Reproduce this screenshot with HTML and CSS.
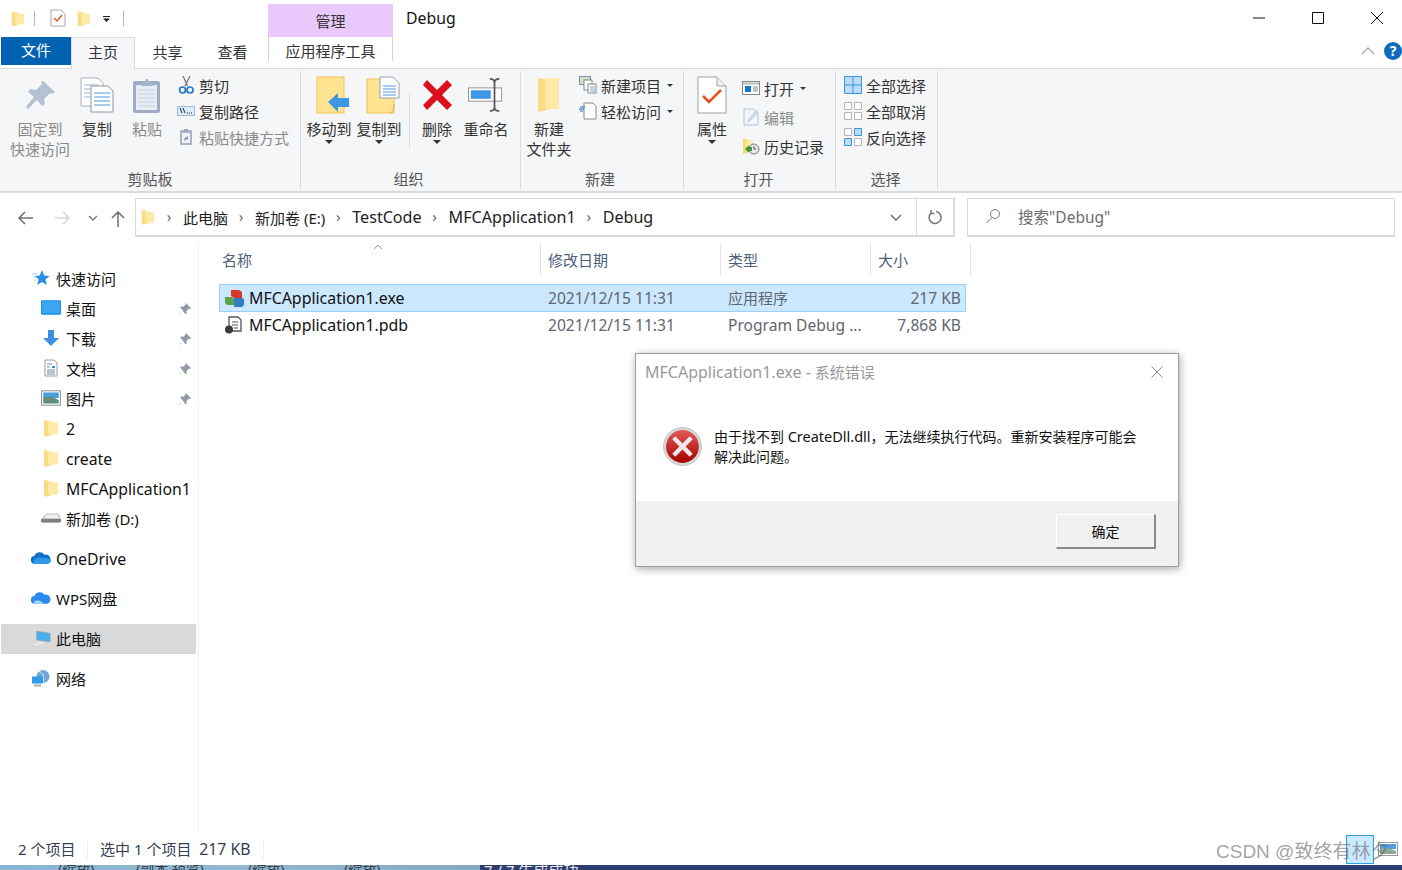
FILE: index.html
```html
<!DOCTYPE html>
<html lang="zh-CN">
<head>
    <meta charset="UTF-8">
    <title>Debug</title>
    <link rel="stylesheet" href="styles.css">
</head>
<body>
    <svg class="sprites" width="0" height="0">
        <symbol id="folder" viewBox="0 0 16 18">
            <path d="M1 1l7 1.500V16.500L1 17.500z" fill="#f8d775"/>
            <path d="M4 2h5v1.500h6v12H4z" fill="#ffe9a6"/>
            <path d="M1 1l4 1.500v15l-4-.5z" fill="#fbdc86"/>
        </symbol>
        <symbol id="pin" viewBox="0 0 16 16">
            <path d="M9 1l6 6-1.500 1-1-.5-3 3 .5 2.500-1.500 1L5.500 10 2 14.500 1.500 14 6 10 2.500 6.500l1-1.500 2.500.5 3-3L8.500 2z" fill="#8f9aa6"/>
        </symbol>
        <symbol id="doc" viewBox="0 0 30 38">
            <path d="M1 1h19l9 9v27H1z" fill="#fff" stroke="#a2a2a2"/>
            <path d="M20 1v9h9" fill="#eee" stroke="#a2a2a2"/>
        </symbol>
    </svg>

    <div class="window">
        <!-- title bar -->
        <div class="titlebar">
            <div class="qat">
                <svg class="ico-16"><use href="#folder"/></svg>
                <span class="qat-sep"></span>
                <svg class="qat-check" viewBox="0 0 16 18">
                    <path d="M1 1h10l4 4v12H1z" fill="#fff" stroke="#a8a8a8"/>
                    <path d="M4 9l3 3 5-6" fill="none" stroke="#e0562a" stroke-width="1.500"/>
                </svg>
                <svg class="ico-16"><use href="#folder"/></svg>
                <svg class="qat-drop" viewBox="0 0 7 6"><path d="M0 .5h7" stroke="#222"/><path d="M0 2.500h7L3.500 6z" fill="#222"/></svg>
                <span class="qat-sep"></span>
            </div>
            <div class="ctx-head">管理</div>
            <div class="win-title">Debug</div>
            <div class="win-buttons">
                <svg class="win-btn" viewBox="0 0 14 14"><path d="M1 7h12" stroke="#111" fill="none"/></svg>
                <svg class="win-btn" viewBox="0 0 14 14"><path d="M1.500 1.500h11v11h-11z" stroke="#111" fill="none"/></svg>
                <svg class="win-btn" viewBox="0 0 14 14"><path d="M1 1l12 12M13 1L1 13" stroke="#111" fill="none"/></svg>
            </div>
        </div>

        <!-- tabs -->
        <div class="tabs">
            <div class="tab tab-file">文件</div>
            <div class="tab tab-home">主页</div>
            <div class="tab tab-share">共享</div>
            <div class="tab tab-view">查看</div>
            <div class="tab tab-tools">应用程序工具</div>
            <div class="tabs-right">
                <svg class="collapse" viewBox="0 0 14 8"><path d="M1 7l6-6 6 6" fill="none" stroke="#a9a9a9" stroke-width="1.300"/></svg>
                <div class="help">?</div>
            </div>
        </div>

        <!-- ribbon -->
        <div class="ribbon">
            <div class="group g-clip">
                <div class="group-body">
                    <div class="large w-pin disabled">
                        <svg class="large-ico" viewBox="0 0 36 36"><path d="M21 4l12 11-3 2-2-1-6 6 1 5-3 2-5-6-9 9-2-2 8-10-6-5 2-3 6 1 6-6-1-2z" fill="#b4c1d2"/></svg>
                        <span>固定到<br>快速访问</span>
                    </div>
                    <div class="large w-copy">
                        <svg class="large-ico" viewBox="0 0 36 36">
                            <path d="M2 1h17l5 5v23H2z" fill="#fff" stroke="#aab0b8"/>
                            <path d="M5 8h15M5 12h15M5 16h15M5 20h15" stroke="#8cb6e6"/>
                            <path d="M12 9h17l5 5v21H12z" fill="#fff" stroke="#8f959c"/>
                            <path d="M15 16h16M15 20h16M15 24h16M15 28h16" stroke="#4f97e8"/>
                        </svg>
                        <span>复制</span>
                    </div>
                    <div class="large w-paste disabled">
                        <svg class="large-ico" viewBox="0 0 36 36">
                            <rect x="4" y="4" width="27" height="32" rx="2" fill="#9fadc4"/>
                            <rect x="7" y="8" width="21" height="25" fill="#e8edf5"/>
                            <path d="M9 13h17M9 17h17M9 21h17M9 25h17M9 29h17" stroke="#c4d0e0"/>
                            <path d="M12 7l4-2 1-3h2l1 3 4 2v2H12z" fill="#a8b5c9"/>
                        </svg>
                        <span>粘贴</span>
                    </div>
                    <div class="small-stack stack-clip">
                        <div class="small">
                            <svg class="small-ico" viewBox="0 0 16 18"><path d="M5 0l4.500 10M12 0L7 10" stroke="#777" stroke-width="1.300" fill="none"/><circle cx="4.500" cy="14" r="3" fill="none" stroke="#1f78c8" stroke-width="1.700"/><circle cx="12" cy="14" r="3" fill="none" stroke="#1f78c8" stroke-width="1.700"/></svg>
                            <span>剪切</span>
                        </div>
                        <div class="small">
                            <svg class="small-ico" viewBox="0 0 18 12"><rect x=".5" y="1.500" width="17" height="9" fill="#dcebfb" stroke="#9fb8d3"/><path d="M3 3l2 5M6 3l2 5" stroke="#223" fill="none"/><path d="M10 8h1M12 8h1M14 8h1" stroke="#223"/></svg>
                            <span>复制路径</span>
                        </div>
                        <div class="small disabled">
                            <svg class="small-ico" viewBox="0 0 16 18"><rect x="2" y="2" width="12" height="15" rx="1" fill="#a9b5c7"/><rect x="4" y="5" width="8" height="10" fill="#eef2f7"/><path d="M6 13l1-4 1 1 2-2v4l-1-1z" fill="#7e8da3"/><rect x="6" y="1" width="4" height="3" fill="#9aa8bc"/></svg>
                            <span>粘贴快捷方式</span>
                        </div>
                    </div>
                </div>
                <div class="group-label">剪贴板</div>
            </div>

            <div class="group g-org">
                <div class="group-body">
                    <div class="large w-org">
                        <svg class="large-ico" viewBox="-5 0 36 38">
                            <rect x="1" y="1" width="27" height="36" fill="#ffe390" stroke="#eec35a"/>
                            <path d="M12 26l10-9v5h11v9H22v5z" fill="#3d97e4"/>
                        </svg>
                        <span>移动到</span>
                        <i class="caret"></i>
                    </div>
                    <div class="large w-org">
                        <svg class="large-ico" viewBox="-5 0 36 38">
                            <rect x="1" y="3" width="27" height="34" fill="#ffe390" stroke="#eec35a"/>
                            <path d="M14 1h13l6 6v15H14z" fill="#fff" stroke="#9aa0a8"/>
                            <path d="M17 10h13M17 13h13M17 16h13M17 19h13" stroke="#4f97e8"/>
                            <path d="M24 37c3-1 4-4 4-9" stroke="#e0b040" fill="none"/>
                        </svg>
                        <span>复制到</span>
                        <i class="caret"></i>
                    </div>
                    <span class="thin-sep"></span>
                    <div class="large w-del">
                        <svg class="large-ico" viewBox="0 0 34 34"><path d="M3 7l4-5 10 10L27 2l5 5-10 10 10 10-5 5-10-10L7 32l-4-5 10-10z" fill="#dc0f1c"/></svg>
                        <span>删除</span>
                        <i class="caret"></i>
                    </div>
                    <div class="large w-org w-ren">
                        <svg class="large-ico" viewBox="0 0 38 36">
                            <rect x=".5" y="10.500" width="35" height="14" fill="#fff" stroke="#8f8f8f"/>
                            <rect x="3" y="13" width="21" height="9" fill="#3d97e4"/>
                            <path d="M23 1c4 0 5 2 5 4v26c0 2-1 4-5 4M33 1c-4 0-5 2-5 4v26c0 2 1 4 5 4" fill="none" stroke="#555" stroke-width="1.800"/>
                        </svg>
                        <span>重命名</span>
                    </div>
                </div>
                <div class="group-label">组织</div>
            </div>

            <div class="group g-new">
                <div class="group-body">
                    <div class="large w-newf">
                        <svg class="large-ico" viewBox="0 0 24 36"><path d="M1 1l12 3v28l-12 3z" fill="#f8d775"/><path d="M7 1h15v28l2 3H7z" fill="#ffe9a6"/><path d="M1 1l7 2v30l-7 2z" fill="#fbdc86"/></svg>
                        <span>新建<br>文件夹</span>
                    </div>
                    <div class="small-stack stack-new">
                        <div class="small">
                            <svg class="small-ico" viewBox="0 0 18 18"><rect x=".5" y=".5" width="11" height="8" fill="#cfe0c8" stroke="#7d93a8"/><rect x="5" y="4" width="8" height="10" fill="#fff" stroke="#888"/><rect x="9" y="8" width="8" height="9" fill="#fff" stroke="#888"/><path d="M11 11h5M11 13h5M11 15h5" stroke="#7fa8d8"/></svg>
                            <span>新建项目</span><i class="caret-inline"></i>
                        </div>
                        <div class="small">
                            <svg class="small-ico" viewBox="0 0 18 18"><path d="M5 1h9l3 3v13H5z" fill="#fff" stroke="#888"/><path d="M1 5h5M0 7h5M1 9h3" stroke="#1b6fc0"/></svg>
                            <span>轻松访问</span><i class="caret-inline"></i>
                        </div>
                    </div>
                </div>
                <div class="group-label">新建</div>
            </div>

            <div class="group g-open">
                <div class="group-body">
                    <div class="large w-prop">
                        <svg class="large-ico" viewBox="0 0 30 38">
                            <use href="#doc"/>
                            <path d="M6 20l6 6 12-12" fill="none" stroke="#e5521f" stroke-width="2.600"/>
                        </svg>
                        <span>属性</span>
                        <i class="caret"></i>
                    </div>
                    <div class="small-stack stack-open">
                        <div class="small">
                            <svg class="small-ico" viewBox="0 0 18 14"><rect x=".5" y=".5" width="17" height="13" fill="#fff" stroke="#888"/><path d="M1 2.500h16" stroke="#bbb" stroke-width="2"/><rect x="3" y="5" width="6" height="6" fill="#0f78d4"/><path d="M11 6h5M11 8h5M11 10h5" stroke="#888"/></svg>
                            <span>打开</span><i class="caret-inline"></i>
                        </div>
                        <div class="small disabled">
                            <svg class="small-ico" viewBox="0 0 16 18"><path d="M1 1h10l4 4v12H1z" fill="#f2f5fa" stroke="#b5c3d8"/><path d="M5 14l1-3 7-8 2 1-7 8z" fill="#d4deeb" stroke="#a9b8cc" stroke-width=".6"/></svg>
                            <span>编辑</span>
                        </div>
                        <div class="small">
                            <svg class="small-ico" viewBox="0 0 18 18"><path d="M1 1l6 2v12l-6 2z" fill="#f8d775"/><path d="M4 3h7v11H4z" fill="#ffe9a6"/><circle cx="12" cy="12" r="5" fill="#e8e8e8" stroke="#777"/><path d="M12 9v3h2" stroke="#555" fill="none"/><path d="M3 12l4-4v2h3v4H7v2z" fill="#3a9a3a"/></svg>
                            <span>历史记录</span>
                        </div>
                    </div>
                </div>
                <div class="group-label">打开</div>
            </div>

            <div class="group g-sel">
                <div class="group-body">
                    <div class="small-stack stack-sel">
                        <div class="small">
                            <svg class="small-ico" viewBox="0 0 18 18"><path d="M.5.5h17v17H.5zM9 .5v17M.5 9h17" stroke="#3a96dd" fill="#bcdcf7"/></svg>
                            <span>全部选择</span>
                        </div>
                        <div class="small">
                            <svg class="small-ico" viewBox="0 0 18 18"><path d="M.5.5h7v7h-7zM10.500.5h7v7h-7zM.5 10.500h7v7h-7zM10.500 10.500h7v7h-7z" stroke="#b5b5b5" fill="#fff"/></svg>
                            <span>全部取消</span>
                        </div>
                        <div class="small">
                            <svg class="small-ico" viewBox="0 0 18 18"><path d="M.5.5h7v7h-7zM10.500 10.500h7v7h-7z" stroke="#b5b5b5" fill="#fff"/><path d="M10.500.5h7v7h-7zM.5 10.500h7v7h-7z" stroke="#3a96dd" fill="#bcdcf7"/></svg>
                            <span>反向选择</span>
                        </div>
                    </div>
                </div>
                <div class="group-label">选择</div>
            </div>
        </div>

        <!-- address row -->
        <div class="addr-row">
            <div class="nav-btns">
                <svg class="nav-back" viewBox="0 0 16 14"><path d="M8 1L2 7l6 6M2 7h14" fill="none" stroke="#6d6d6d" stroke-width="1.500"/></svg>
                <svg class="nav-fwd" viewBox="0 0 16 14"><path d="M8 1l6 6-6 6M14 7H0" fill="none" stroke="#d6d6d6" stroke-width="1.500"/></svg>
                <svg class="nav-down" viewBox="0 0 10 6"><path d="M1 1l4 4 4-4" fill="none" stroke="#7a7a7a" stroke-width="1.400"/></svg>
                <svg class="nav-up" viewBox="0 0 14 16"><path d="M1 7l6-6 6 6M7 1v15" fill="none" stroke="#6d6d6d" stroke-width="1.500"/></svg>
            </div>
            <div class="addr-box">
                <svg class="addr-folder"><use href="#folder"/></svg>
                <span class="crumb-sep">›</span><span class="crumb">此电脑</span>
                <span class="crumb-sep">›</span><span class="crumb">新加卷 (E:)</span>
                <span class="crumb-sep">›</span><span class="crumb crumb-lat">TestCode</span>
                <span class="crumb-sep">›</span><span class="crumb crumb-lat">MFCApplication1</span>
                <span class="crumb-sep">›</span><span class="crumb crumb-lat">Debug</span>
                <div class="addr-tools">
                    <svg class="addr-down" viewBox="0 0 12 7"><path d="M1 1l5 5 5-5" fill="none" stroke="#666" stroke-width="1.400"/></svg>
                    <div class="addr-refresh">
                        <svg viewBox="0 0 16 16" width="16" height="16"><path d="M9 2.500a6 6 0 1 1-5 1.500M4 1v3.500h3.500" fill="none" stroke="#777" stroke-width="1.500"/></svg>
                    </div>
                </div>
            </div>
            <div class="search-box">
                <svg class="search-ico" viewBox="0 0 16 16"><circle cx="10" cy="6" r="4.500" fill="none" stroke="#777"/><path d="M7 9.500L1.500 15" stroke="#777"/></svg>
                <span>搜索"Debug"</span>
            </div>
        </div>

        <!-- main -->
        <div class="main">
            <div class="navpane">
                <div class="nav-item top">
                    <svg class="nav-ico" viewBox="0 0 18 18"><path d="M10 1l2.200 5.500 5.300.4-4.100 3.500 1.400 5.600L10 13l-4.800 3 1.400-5.600L3 7l4.700-.5z" fill="#2d8de0"/><path d="M0 5h5M1 8h3M2 11h2" stroke="#9cc8ee"/></svg>
                    <span>快速访问</span>
                </div>
                <div class="nav-item child">
                    <svg class="nav-ico" viewBox="0 0 18 14"><rect width="18" height="13" rx="1" fill="#1e8fe6"/><rect x="1" y="1" width="16" height="10.500" fill="#3aa6f2"/></svg>
                    <span>桌面</span><svg class="pin"><use href="#pin"/></svg>
                </div>
                <div class="nav-item child">
                    <svg class="nav-ico" viewBox="0 0 18 18"><path d="M6 1h6v8h5l-8 8-8-8h5z" fill="#3d8fe0"/></svg>
                    <span>下载</span><svg class="pin"><use href="#pin"/></svg>
                </div>
                <div class="nav-item child">
                    <svg class="nav-ico" viewBox="0 0 16 18"><path d="M2 1h9l3 3v13H2z" fill="#fff" stroke="#9a9a9a"/><path d="M4 5h5M4 8h3M4 11h8M4 13h8M4 15h8" stroke="#7b8a99"/><path d="M9 7h3v2H9z" fill="#3d8fe0"/></svg>
                    <span>文档</span><svg class="pin"><use href="#pin"/></svg>
                </div>
                <div class="nav-item child">
                    <svg class="nav-ico" viewBox="0 0 18 14"><rect x=".5" y=".5" width="17" height="13" fill="#fff" stroke="#9a9a9a"/><rect x="2" y="2" width="14" height="5" fill="#4d9de0"/><path d="M2 7c3-2 7-2 14 2v3H2z" fill="#5e8f7d"/></svg>
                    <span>图片</span><svg class="pin"><use href="#pin"/></svg>
                </div>
                <div class="nav-item child"><svg class="nav-ico"><use href="#folder"/></svg><span class="lat">2</span></div>
                <div class="nav-item child"><svg class="nav-ico"><use href="#folder"/></svg><span class="lat">create</span></div>
                <div class="nav-item child"><svg class="nav-ico"><use href="#folder"/></svg><span class="lat">MFCApplication1</span></div>
                <div class="nav-item child">
                    <svg class="nav-ico" viewBox="0 0 18 10"><path d="M0 6l5-5h11l2 5v2l-1 1H1L0 8z" fill="#c8c8c8"/><path d="M0 6h18v2l-1 1H1L0 8z" fill="#7f7f7f"/><path d="M5 2h10l1 3H3z" fill="#efefef"/></svg>
                    <span>新加卷 (D:)</span>
                </div>
                <div class="nav-item top gap">
                    <svg class="nav-ico" viewBox="0 0 21 14"><path d="M4 13a4 4 0 0 1-.500-8A6 6 0 0 1 14 3.500 4.500 4.500 0 0 1 17 13z" fill="#0f6fc6"/><path d="M4 13a4 4 0 0 1 0-5c4-2 12-2 17 1 0 3-2 4-4 4z" fill="#2a9bea"/></svg>
                    <span class="lat">OneDrive</span>
                </div>
                <div class="nav-item top gap">
                    <svg class="nav-ico" viewBox="0 0 21 14"><path d="M4 13a4 4 0 0 1-.500-8A6 6 0 0 1 14 3.500 4.500 4.500 0 0 1 17 13z" fill="#2a8bf0"/><path d="M3 11c4-3 8-1 10 2H4z" fill="#a6d4fb"/></svg>
                    <span>WPS网盘</span>
                </div>
                <div class="nav-item top gap selected">
                    <svg class="nav-ico" viewBox="0 0 21 16"><path d="M6 1l14 2v9L6 10z" fill="#48b0ee" stroke="#7f9fb5" stroke-width=".7"/><path d="M1 15l8-3 6 1-7 3z" fill="#e8e8e8"/></svg>
                    <span>此电脑</span>
                </div>
                <div class="nav-item top gap">
                    <svg class="nav-ico" viewBox="0 0 20 17"><circle cx="12" cy="7" r="6.500" fill="#6fa8d8"/><path d="M8 2c4 1 6 5 4 11" stroke="#d8e8f5" fill="none"/><rect x="1" y="7" width="11" height="7" fill="#2f9ae8"/><path d="M3 16h7" stroke="#aaa" stroke-width="2"/></svg>
                    <span>网络</span>
                </div>
            </div>

            <div class="files">
                <svg class="sort-up" viewBox="0 0 10 6"><path d="M1 5l4-4 4 4" fill="none" stroke="#999"/></svg>
                <div class="file-head">
                    <div class="col c-name">名称</div>
                    <div class="col c-date">修改日期</div>
                    <div class="col c-type">类型</div>
                    <div class="col c-size">大小</div>
                </div>
                <div class="file-row sel">
                    <div class="c-name cell-name">
                        <svg class="file-ico" viewBox="0 0 20 18">
                            <path d="M7 1h8l3 2v6h-8l-3-2z" fill="#d8382c"/>
                            <path d="M1 8h7l2 2v6H3l-2-2z" fill="#5aa34a"/>
                            <path d="M10 9h8l2 1v6l-2 2h-8z" fill="#2f7fc1"/>
                        </svg>
                        <span>MFCApplication1.exe</span>
                    </div>
                    <div class="cell c-date">2021/12/15 11:31</div>
                    <div class="cell c-type cjk">应用程序</div>
                    <div class="cell c-size">217 KB</div>
                </div>
                <div class="file-row">
                    <div class="c-name cell-name">
                        <svg class="file-ico" viewBox="0 0 20 18">
                            <path d="M5 1h9l3 3v11H5z" fill="#fff" stroke="#555" stroke-width="1.300"/>
                            <path d="M8 6h6M8 9h6M10 12h4" stroke="#555" stroke-width="1.200"/>
                            <circle cx="5" cy="13.500" r="4" fill="#3a3a3a"/>
                        </svg>
                        <span>MFCApplication1.pdb</span>
                    </div>
                    <div class="cell c-date">2021/12/15 11:31</div>
                    <div class="cell c-type">Program Debug ...</div>
                    <div class="cell c-size">7,868 KB</div>
                </div>
            </div>
        </div>

        <!-- status bar -->
        <div class="status">
            <span class="st-count">2 个项目</span>
            <span class="st-sel">选中 1 个项目&nbsp; <span class="lat">217 KB</span></span>
        </div>

        <!-- sliver of the window underneath -->
        <div class="under">
            <div class="under-left">
                <span class="u1">(缩放)</span>
                <span class="u2">(副本 预览)</span>
                <span class="u3">(缩放)</span>
                <span class="u4">(缩放)</span>
            </div>
            <div class="under-right"><span>7 / 7 生成成功</span></div>
        </div>
    </div>

    <!-- error dialog -->
    <div class="dialog">
        <div class="dlg-title">
            <span><span class="dlg-name">MFCApplication1.exe -</span> 系统错误</span>
            <svg class="dlg-close" viewBox="0 0 12 12"><path d="M.5.5l11 11M11.500.5l-11 11" stroke="#8a8a8a" fill="none"/></svg>
        </div>
        <div class="dlg-body">
            <svg class="dlg-ico" viewBox="0 0 38 38">
                <defs>
                    <linearGradient id="errfill" x1="0" y1="0" x2="0" y2="1">
                        <stop offset="0" stop-color="#e05a5a"/>
                        <stop offset="1" stop-color="#a50000"/>
                    </linearGradient>
                </defs>
                <circle cx="19" cy="19" r="18.500" fill="#d8d8d8" stroke="#aaa" stroke-width=".6"/>
                <circle cx="19" cy="19" r="16" fill="url(#errfill)"/>
                <path d="M12 9l7 7 7-7 3 3-7 7 7 7-3 3-7-7-7 7-3-3 7-7-7-7z" fill="#eee8e8"/>
            </svg>
            <div class="dlg-text">由于找不到 <span class="dlg-file">CreateDll.dll</span>，无法继续执行代码。重新安装程序可能会解决此问题。</div>
        </div>
        <div class="dlg-foot">
            <div class="dlg-ok">确定</div>
        </div>
    </div>

    <!-- watermark + stray thumbnail -->
    <div class="thumb-sel"></div>
    <svg class="thumb-pic" viewBox="0 0 20 14"><rect x=".5" y=".5" width="19" height="13" fill="#fff" stroke="#999"/><rect x="2" y="2" width="16" height="5" fill="#4d9de0"/><path d="M2 7c3-2 7-2 16 2v3H2z" fill="#8aa79a"/></svg>
    <div class="watermark">CSDN @致终有林夕</div>
</body>
</html>
```

FILE: styles.css
```css
* {
    box-sizing: border-box;
}

html, body {
    margin: 0;
    padding: 0;
    height: 870px;
    overflow: hidden;
}

body {
    position: relative;
    background: #ffffff;
    font-family: "Noto Sans", "Noto Sans CJK SC", sans-serif;
    font-size: 15px;
    color: #1a1a1a;
}

.lat {
    font-size: 15.800px;
}

.sprites {
    position: absolute;
}

.window {
    display: flex;
    flex-direction: column;
    height: 870px;
}

/* title bar */
.titlebar {
    display: flex;
    height: 37px;
    padding-top: 4px;
    flex: none;
}

.qat {
    display: flex;
    align-items: center;
    width: 268px;
    height: 28px;
    padding-left: 11px;
}

.ico-16 {
    width: 14px;
    height: 17px;
}

.qat-sep {
    width: 1px;
    height: 15px;
    background: #b5b5b5;
    margin: 0 15px 0 9px;
}

.qat-check {
    width: 16px;
    height: 18px;
    margin-right: 11px;
}

.qat-drop {
    width: 7px;
    height: 6px;
    margin: 2px 0 0 12px;
}

.qat .qat-sep:last-child {
    margin-left: 13px;
}

.ctx-head {
    width: 125px;
    background: #e9c8fb;
    text-align: center;
    line-height: 34px;
    color: #333;
}

.win-title {
    margin-left: 13px;
    line-height: 28px;
    font-size: 15.800px;
    color: #111;
}

.win-buttons {
    display: flex;
    margin-left: auto;
    gap: 45px;
    padding: 7px 18px 0 0;
}

.win-btn {
    width: 14px;
    height: 14px;
}

/* tabs */
.tabs {
    display: flex;
    height: 32px;
    flex: none;
    position: relative;
    border-bottom: 1px solid #dadbdc;
}

.tab {
    text-align: center;
    line-height: 30px;
    color: #333;
}

.tab-file {
    width: 70px;
    height: 28px;
    margin-left: 1px;
    background: #0063b1;
    color: #fff;
    line-height: 27px;
}

.tab-home {
    width: 64px;
    height: 32px;
    background: #f5f6f7;
    border: 1px solid #dadbdc;
    border-bottom: 0;
    line-height: 28px;
}

.tab-share {
    width: 65px;
}

.tab-view {
    width: 65px;
}

.tab-tools {
    width: 125px;
    margin-left: 3px;
    height: 24px;
    border: 1px solid #d4d4d4;
    border-width: 0 1px;
    line-height: 29px;
}

.tabs-right {
    display: flex;
    align-items: center;
    gap: 9px;
    margin-left: auto;
    height: 30px;
}

.collapse {
    width: 14px;
    height: 8px;
    margin-bottom: 2px;
}

.help {
    width: 18px;
    height: 18px;
    border-radius: 50%;
    background: #0f6cbd;
    color: #fff;
    font-weight: bold;
    font-size: 14px;
    line-height: 18px;
    text-align: center;
    margin-bottom: 2px;
}

/* ribbon */
.ribbon {
    display: flex;
    height: 124px;
    flex: none;
    background: #f5f6f7;
    border-bottom: 2px solid #dadbdc;
    padding-top: 2px;
    color: #333;
}

.group {
    display: flex;
    flex-direction: column;
    border-right: 1px solid #dadbdc;
    height: 118px;
    flex: none;
}

.group-body {
    display: flex;
    height: 98px;
}

.group-label {
    text-align: center;
    line-height: 20px;
    color: #555;
}

.g-clip { width: 301px; }
.g-clip .group-body { padding-left: 10px; }
.g-org { width: 220px; }
.g-org .group-body { padding-left: 3px; }
.g-org .group-label { padding-right: 4px; }
.g-new { width: 163px; }
.g-new .group-body { padding-left: 2px; }
.g-new .group-label { padding-right: 4px; }
.g-open { width: 152px; }
.g-open .group-label { padding-right: 2px; }
.g-sel { width: 102px; }
.g-sel .group-label { padding-right: 2px; }

.large {
    display: flex;
    flex-direction: column;
    align-items: center;
    text-align: center;
    line-height: 20px;
    flex: none;
    white-space: nowrap;
}

.large-ico {
    width: 36px;
    height: 38px;
    margin: 5px 0;
    flex: none;
    overflow: visible;
}

.disabled, .disabled span {
    color: #8a8a8a;
}

.w-pin { width: 60px; }
.w-copy { width: 54px; }
.w-paste { width: 46px; }
.w-org { width: 50px; }
.w-del { width: 46px; }
.w-ren { margin-left: 1px; }
.w-newf { width: 52px; }
.w-prop { width: 56px; }

.thin-sep {
    width: 1px;
    height: 55px;
    margin: 22px 4px 0 5px;
    background: #dadbdc;
}

.w-del .large-ico {
    height: 34px;
    margin: 7px 0;
}

.w-newf .large-ico {
    width: 24px;
}

.w-prop .large-ico {
    width: 30px;
}

.caret {
    width: 0;
    height: 0;
    border: 4px solid transparent;
    border-top-color: #333;
    border-bottom: 0;
    margin-top: 1px;
}

.small-stack {
    display: flex;
    flex-direction: column;
    white-space: nowrap;
}

.small {
    display: flex;
    align-items: center;
    height: 26px;
}

.small-ico {
    width: 18px;
    height: 18px;
    flex: none;
    margin-right: 4px;
}

.caret-inline {
    width: 0;
    height: 0;
    border: 3px solid transparent;
    border-top-color: #333;
    border-bottom: 0;
    margin-left: 6px;
}

.stack-clip { margin-left: 7px; padding-top: 1px; }
.stack-new { margin-left: 4px; padding-top: 1px; }
.stack-open { margin-left: 2px; padding-top: 4px; gap: 3px; }
.stack-sel { margin-left: 8px; padding-top: 1px; }

/* address row */
.addr-row {
    display: flex;
    height: 50px;
    padding-top: 5px;
    flex: none;
}

.nav-btns {
    display: flex;
    align-items: center;
    width: 135px;
    height: 39px;
    padding-left: 17px;
}

.nav-back, .nav-fwd {
    width: 16px;
    height: 14px;
}

.nav-fwd {
    margin-left: 22px;
}

.nav-down {
    width: 10px;
    height: 6px;
    margin-left: 17px;
}

.nav-up {
    width: 14px;
    height: 16px;
    margin-left: 13px;
    margin-top: 2px;
}

.addr-box {
    display: flex;
    align-items: center;
    width: 820px;
    height: 39px;
    border: 2px solid #d9d9d9;
    border-width: 1px 2px 2px 1px;
    padding-left: 5px;
    color: #222;
}

.addr-folder {
    width: 14px;
    height: 18px;
    margin-right: 1px;
}

.crumb-sep {
    width: 10px;
    margin: -3px 8px 0 8px;
    text-align: center;
    color: #666;
    font-size: 15px;
    line-height: 16px;
}

.crumb {
    margin-left: 1px;
}

.crumb-lat {
    font-size: 16.100px;
}

.addr-tools {
    display: flex;
    align-items: center;
    margin-left: auto;
    height: 100%;
}

.addr-down {
    width: 12px;
    height: 7px;
    margin-right: 14px;
}

.addr-refresh {
    display: flex;
    align-items: center;
    justify-content: center;
    width: 37px;
    height: 100%;
    border-left: 1px solid #d9d9d9;
}

.search-box {
    display: flex;
    align-items: center;
    width: 428px;
    height: 39px;
    margin-left: 12px;
    border: 1px solid #d9d9d9;
    border-bottom-width: 2px;
    padding: 0 0 2px 17px;
    color: #6d6d6d;
    font-size: 15.500px;
}

.search-ico {
    width: 16px;
    height: 16px;
    margin-right: 17px;
}

/* main area */
.main {
    display: flex;
    flex: 1;
    min-height: 0;
}

.navpane {
    width: 199px;
    padding-top: 21px;
    border-right: 1px solid #f0f0f0;
    flex: none;
}

.nav-item {
    display: flex;
    align-items: center;
    position: relative;
    height: 30px;
    padding-bottom: 2px;
    color: #111;
    white-space: nowrap;
    width: 195px;
    margin-left: 1px;
}

.nav-item .lat {
    padding-top: 2px;
}

.nav-item.top {
    padding-left: 30px;
}

.nav-item.child {
    padding-left: 40px;
}

.nav-item.gap {
    margin-top: 10px;
}

.nav-item.selected {
    background: #d9d9d9;
}

.nav-ico {
    width: 20px;
    height: 18px;
    flex: none;
    margin-right: 5px;
}

.pin {
    position: absolute;
    right: 4px;
    top: 8px;
    width: 14px;
    height: 14px;
}

/* file list */
.files {
    position: relative;
    flex: 1;
    padding-left: 20px;
}

.sort-up {
    position: absolute;
    left: 174px;
    top: 1px;
    width: 10px;
    height: 6px;
}

.file-head {
    display: flex;
    height: 33px;
    margin-bottom: 8px;
    color: #4c607a;
}

.col {
    line-height: 34px;
    padding-left: 7px;
    border-right: 1px solid #e5e5e5;
}

.c-name { width: 322px; }
.c-date { width: 180px; }
.c-type { width: 150px; }
.c-size { width: 100px; }

.file-head .c-name { padding-left: 3px; }

.file-row {
    display: flex;
    align-items: center;
    height: 27px;
    width: 747px;
    border: 1px solid transparent;
    padding-bottom: 1px;
}

.file-row.sel {
    height: 28px;
    background: #cce8ff;
    border-color: #99d1ff;
}

.cell-name {
    display: flex;
    align-items: center;
    padding-left: 4px;
    color: #111;
    font-size: 15.900px;
}

.file-ico {
    width: 20px;
    height: 18px;
    margin-right: 5px;
    flex: none;
}

.cell {
    color: #5f6670;
    padding-left: 6px;
    font-size: 15.600px;
}

.cell.cjk {
    font-size: 15px;
}

.cell.c-size {
    width: 93px;
    padding: 0 4px 0 0;
    text-align: right;
}

/* status + under strip */
.status {
    display: flex;
    align-items: center;
    height: 33px;
    flex: none;
    color: #333f50;
}

.st-count {
    width: 88px;
    padding-left: 18px;
    border-right: 1px solid #f0f0f0;
    line-height: 22px;
}

.st-sel {
    width: 176px;
    padding-left: 12px;
    border-right: 1px solid #f0f0f0;
    line-height: 22px;
    white-space: nowrap;
}

.under {
    display: flex;
    height: 5px;
    flex: none;
    overflow: hidden;
    font-size: 14px;
    line-height: 14px;
}

.under-left {
    display: flex;
    width: 480px;
    background: linear-gradient(90deg, #86b6d4, #93b7cf 50%, #86a9c2);
    color: #34404c;
}

.under-left span {
    margin-top: -2px;
    white-space: nowrap;
}

.u1 { margin-left: 58px; width: 40px; }
.u2 { margin-left: 38px; width: 72px; }
.u3 { margin-left: 40px; width: 42px; }
.u4 { margin-left: 54px; width: 42px; }

.under-right {
    flex: 1;
    background: #2f3d6f;
    color: #e8e8f0;
}

.under-right span {
    display: block;
    margin: -2px 0 0 4px;
    font-size: 15px;
}

/* dialog */
.dialog {
    position: absolute;
    left: 635px;
    top: 353px;
    width: 544px;
    height: 214px;
    display: flex;
    flex-direction: column;
    background: #fff;
    border: 1px solid #9e9e9e;
    box-shadow: 1px 2px 8px rgba(0, 0, 0, 0.35);
}

.dlg-title {
    display: flex;
    align-items: center;
    justify-content: space-between;
    height: 37px;
    padding: 0 15px 2px 9px;
    color: #999;
}

.dlg-name {
    font-size: 16px;
}

.dlg-close {
    width: 12px;
    height: 12px;
}

.dlg-body {
    display: flex;
    align-items: center;
    height: 110px;
    padding: 1px 36px 0 27px;
}

.dlg-ico {
    width: 39px;
    height: 39px;
    flex: none;
    margin-right: 12px;
}

.dlg-text {
    font-size: 14px;
    line-height: 20px;
    color: #111;
}

.dlg-file {
    font-size: 14.500px;
}

.dlg-foot {
    display: flex;
    justify-content: flex-end;
    flex: 1;
    padding: 13px 22px 0 0;
    background: #f0f0f0;
}

.dlg-ok {
    width: 100px;
    height: 35px;
    background: #f0f0f0;
    border: 1px solid #fff;
    border-right: 2px solid #8a8a8a;
    border-bottom: 2px solid #8a8a8a;
    text-align: center;
    line-height: 34px;
    font-size: 14px;
    color: #111;
}

/* bits over the status bar */
.watermark {
    position: absolute;
    left: 1216px;
    top: 839px;
    font-family: "Liberation Sans", "Noto Sans CJK SC", sans-serif;
    font-size: 19px;
    line-height: 26px;
    color: rgba(110, 110, 110, 0.65);
    white-space: nowrap;
}

.thumb-sel {
    position: absolute;
    left: 1346px;
    top: 835px;
    width: 28px;
    height: 29px;
    background: #cce8ff;
    border: 1px solid #2ea0e6;
}

.thumb-pic {
    position: absolute;
    left: 1378px;
    top: 842px;
    width: 20px;
    height: 14px;
}
```
